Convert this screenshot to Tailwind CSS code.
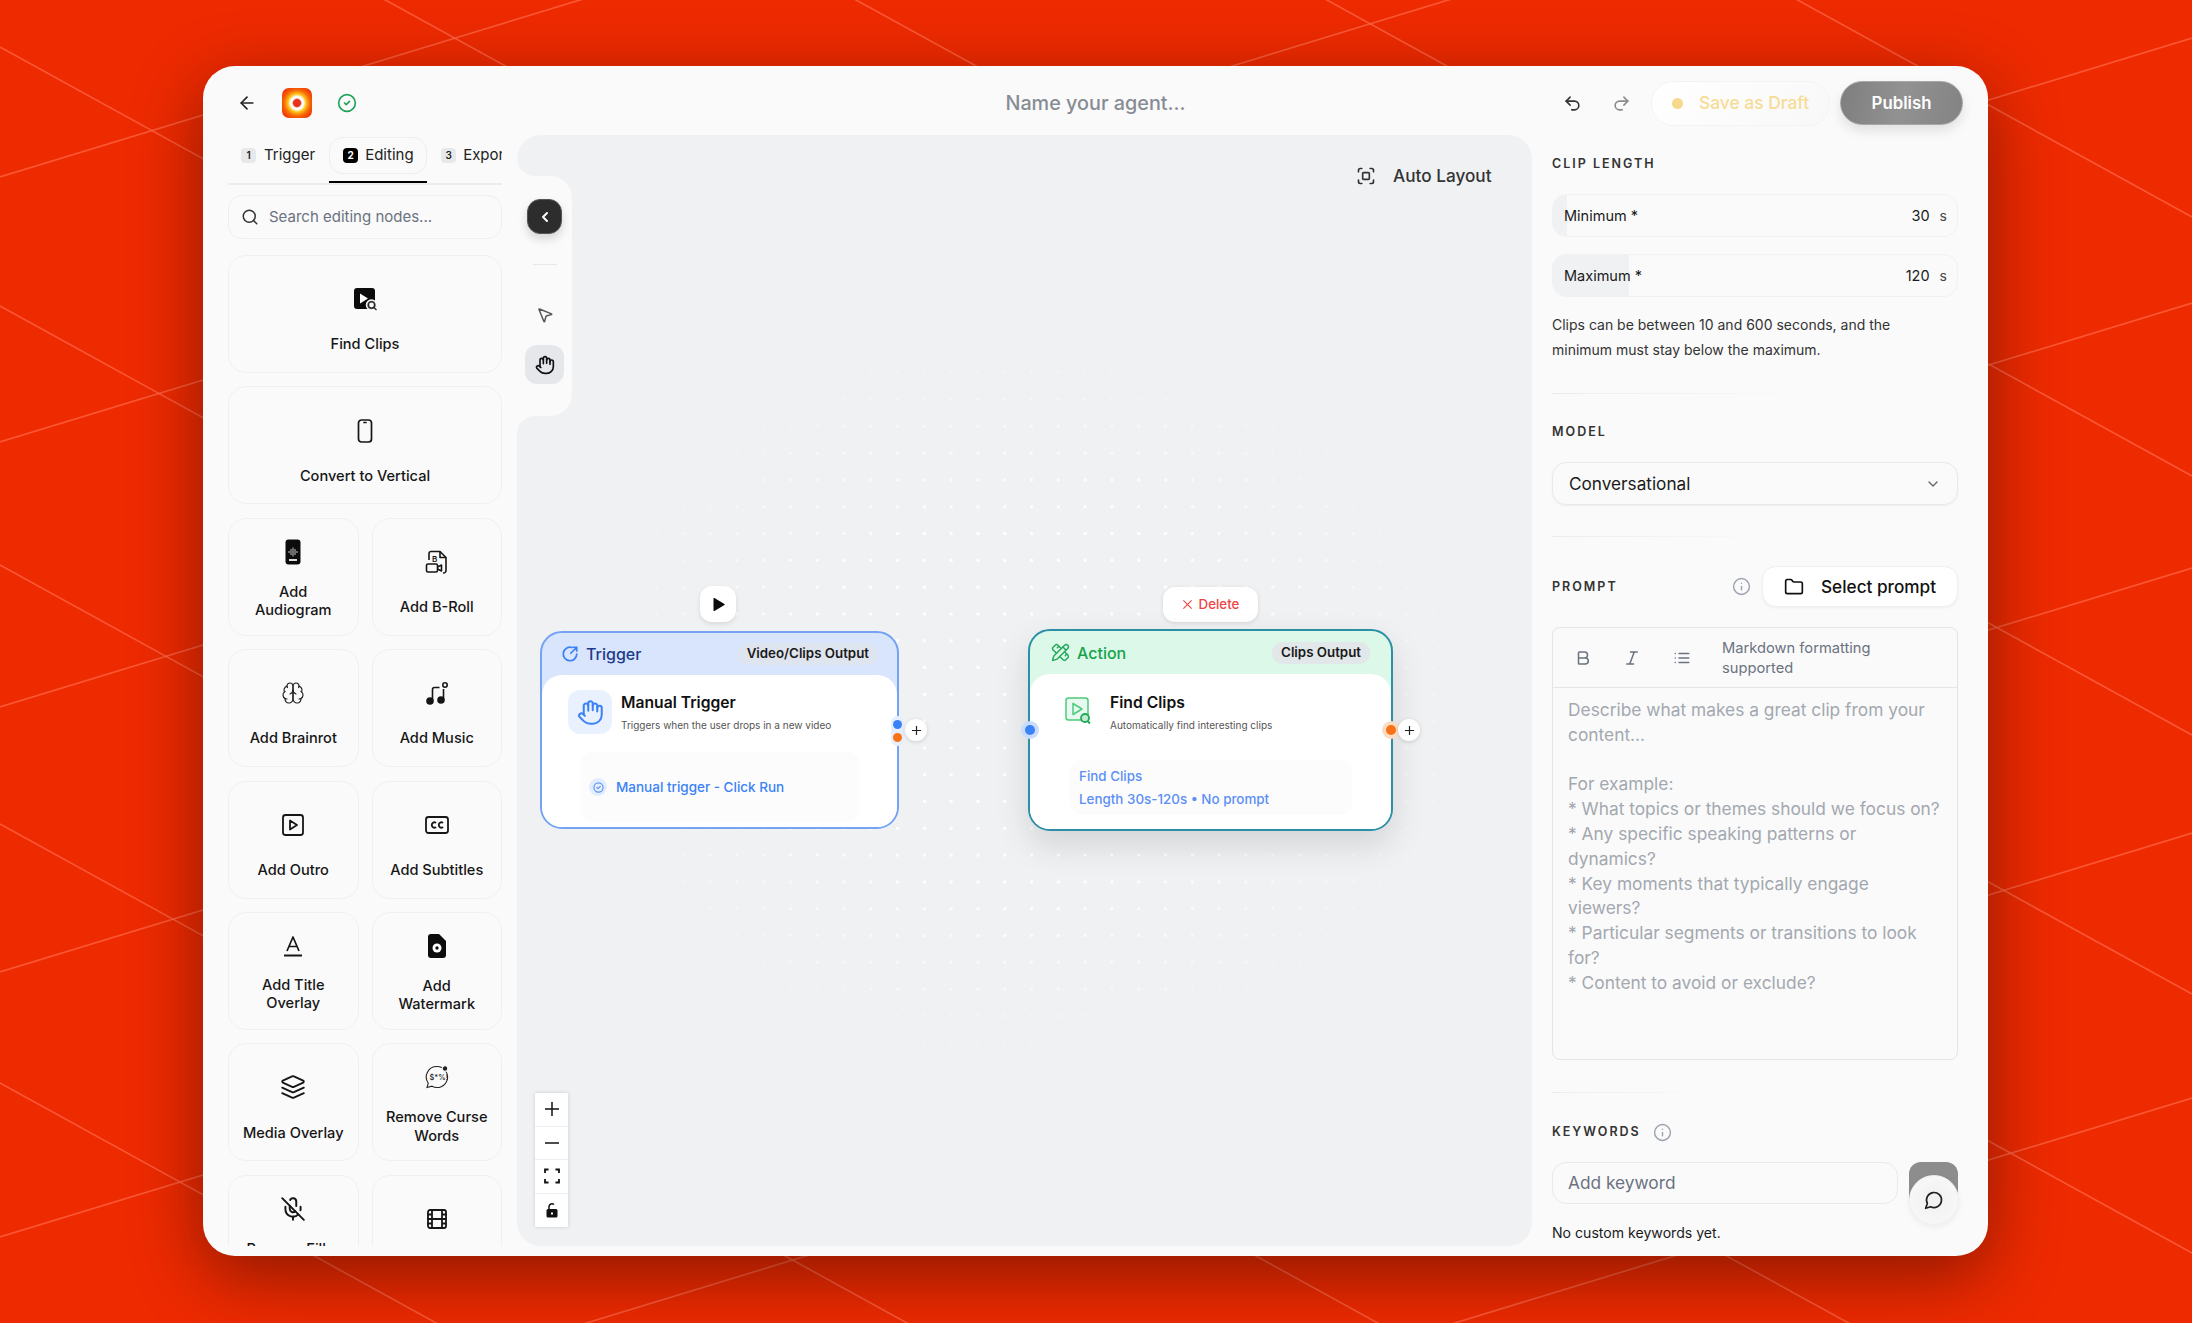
<!DOCTYPE html>
<html lang="en">
<head>
<meta charset="UTF-8">
<title>Agent builder</title>
<script src="https://cdn.jsdelivr.net/npm/@tailwindcss/browser@4"></script>
</head>
<body class="[font-family:Inter,sans-serif] bg-[#ee2a00] overflow-hidden">
<div class="relative w-[2192px] h-[1323px] overflow-hidden pt-[66px] pl-[203px]">

  <!-- background lines -->
  <svg class="absolute inset-0" width="2192" height="1323" viewBox="0 0 2192 1323" fill="none" stroke="#ff6a4a" stroke-width="1.7" stroke-opacity="0.7">
    <path d="M0 -989 L2192 217"/><path d="M0 -730 L2192 476"/><path d="M0 -471 L2192 735"/><path d="M0 -212 L2192 994"/>
    <path d="M0 47 L2192 1253"/><path d="M0 306 L2192 1512"/><path d="M0 565 L2192 1771"/><path d="M0 824 L2192 2030"/><path d="M0 1083 L2192 2289"/>
    <path d="M0 177 L2192 -492"/><path d="M0 442 L2192 -227"/><path d="M0 707 L2192 38"/><path d="M0 972 L2192 303"/><path d="M0 1237 L2192 568"/>
    <path d="M0 1502 L2192 833"/><path d="M0 1767 L2192 1098"/><path d="M0 2032 L2192 1363"/>
  </svg>

  <!-- window -->
  <div class="relative w-[1785px] h-[1190px] rounded-[32px] bg-[#fafafa] shadow-[0_20px_70px_rgba(0,0,0,0.42)] overflow-hidden flex flex-col">

    <!-- header -->
    <header class="h-[69px] shrink-0 pt-[5px] flex items-center">
      <div class="flex-1 flex items-center pl-[34px]">
        <svg class="w-5 h-5 text-[#222]" viewBox="0 0 24 24" fill="none" stroke="currentColor" stroke-width="2" stroke-linecap="round" stroke-linejoin="round"><path d="m12 19-7-7 7-7"/><path d="M19 12H5"/></svg>
        <div class="ml-[25px] w-[30px] h-[30px] rounded-[7px] bg-[radial-gradient(circle,#e8321a_0_3.5px,#fff_5px_6.5px,#fcc419_9px,#f76707_13px,#ee2a00_19px)]"></div>
        <svg class="ml-[25px] w-[20px] h-[20px] text-[#22a35a]" viewBox="0 0 24 24" fill="none" stroke="currentColor" stroke-width="2" stroke-linecap="round" stroke-linejoin="round"><circle cx="12" cy="12" r="10"/><path d="m9 12 2 2 4-4"/></svg>
      </div>
      <div class="-ml-[9px] pt-[2px] text-[19.8px] font-medium text-[#878c94]">Name your agent...</div>
      <div class="flex-1 flex items-center justify-end pr-[25px]">
        <svg class="w-[19px] h-[19px] text-[#333]" viewBox="0 0 24 24" fill="none" stroke="currentColor" stroke-width="2" stroke-linecap="round" stroke-linejoin="round"><path d="M9 14 4 9l5-5"/><path d="M4 9h10.5a5.5 5.5 0 0 1 5.5 5.5a5.5 5.5 0 0 1-5.5 5.5H11"/></svg>
        <svg class="ml-[30px] w-[19px] h-[19px] text-[#8c8c8c]" viewBox="0 0 24 24" fill="none" stroke="currentColor" stroke-width="2" stroke-linecap="round" stroke-linejoin="round"><path d="m15 14 5-5-5-5"/><path d="M20 9H9.5A5.5 5.5 0 0 0 4 14.5A5.5 5.5 0 0 0 9.5 20H13"/></svg>
        <div class="ml-[20px] w-[179px] h-[45px] rounded-full border border-[#f3f3f3] bg-[linear-gradient(135deg,#fff,#f8f8f8)] flex items-center pl-[20px] gap-[16px]">
          <span class="w-[11px] h-[11px] rounded-full bg-[#f6d98a]"></span>
          <span class="text-[17.4px] font-medium text-[#f7dc95]">Save as Draft</span>
        </div>
        <div class="ml-[10px] w-[123px] h-[44px] pt-[2px] rounded-full border border-[#a8a8a8] bg-[linear-gradient(100deg,#7e7e7e,#929292_50%,#838383)] shadow-[0_6px_12px_rgba(0,0,0,0.1)] flex items-center justify-center text-[16.8px] font-semibold text-white">Publish</div>
      </div>
    </header>

    <div class="flex-1 flex min-h-0">

      <!-- left sidebar -->
      <aside class="w-[314px] shrink-0 pl-[25px] pr-[15px] pb-[10px] flex flex-col min-h-0">
        <div class="h-[50px] shrink-0 border-b-2 border-[#ececec] flex items-start overflow-hidden text-[15px] text-[#222]">
          <div class="h-[37px] mt-[2px] pl-[13px] flex items-center gap-[8px]">
            <span class="w-[15px] h-[15px] rounded-[4px] bg-[#e7e8ea] flex items-center justify-center text-[10px] font-semibold">1</span>Trigger
          </div>
          <div class="relative h-[48px] ml-[14px] w-[98px] shrink-0">
            <div class="h-[37px] mt-[2px] rounded-[14px] border border-[#eeeeee] flex items-center pl-[13px] gap-[7px]">
              <span class="w-[15px] h-[15px] rounded-[4px] bg-black text-white flex items-center justify-center text-[10px] font-bold">2</span>Editing
            </div>
            <div class="absolute left-0 right-0 top-[46px] h-[2px] bg-black"></div>
          </div>
          <div class="h-[37px] mt-[2px] ml-[14px] flex items-center gap-[7px] shrink-0">
            <span class="w-[15px] h-[15px] rounded-[4px] bg-[#e7e8ea] flex items-center justify-center text-[10px] font-semibold">3</span>Export
          </div>
        </div>

        <div class="mt-[10px] h-[44px] shrink-0 rounded-[14px] border border-[#eeeeee] flex items-center pl-[12px] gap-[10px] text-[15px] text-[#6b7280]">
          <svg class="w-[18px] h-[18px] text-[#333]" viewBox="0 0 24 24" fill="none" stroke="currentColor" stroke-width="2" stroke-linecap="round"><circle cx="11" cy="11" r="8"/><path d="m21 21-4.3-4.3"/></svg>
          Search editing nodes...
        </div>

        <div class="mt-[16px] flex-1 min-h-0 overflow-hidden">
          <div class="grid grid-cols-2 gap-x-[13px] gap-y-[13.4px] text-[14.6px] leading-[18.5px] font-medium text-[#161616] text-center">

            <div class="col-span-2 h-[118px] rounded-[18px] border border-[#f0f0f0] flex flex-col items-center justify-center gap-[24px] pt-[13px]">
              <svg class="w-[26px] h-[24px]" viewBox="0 0 26 24"><rect x="2" y="1" width="21" height="21" rx="3" fill="#0c0c0c"/><path d="M8 6.500v10l8-5z" fill="#fff"/><circle cx="19.5" cy="18" r="5" fill="#555" stroke="#fafafa" stroke-width="1.5"/><circle cx="19.5" cy="18" r="3" fill="#fafafa" stroke="#222" stroke-width="1.2"/><path d="m22 20.5 2.5 2.5" stroke="#222" stroke-width="1.3"/></svg>
              <div>Find Clips</div>
            </div>

            <div class="col-span-2 h-[118px] rounded-[18px] border border-[#f0f0f0] flex flex-col items-center justify-center gap-[24px] pt-[13px]">
              <svg class="w-[24px] h-[24px]" viewBox="0 0 24 24" fill="none" stroke="#161616" stroke-width="1.7"><rect x="5.5" y="1" width="13" height="22" rx="3"/><path d="M11 3.5h2" stroke-linecap="round"/></svg>
              <div>Convert to Vertical</div>
            </div>

            <div class="h-[118px] rounded-[18px] border border-[#f0f0f0] flex flex-col items-center justify-center gap-[18px] pt-[5px]">
              <svg class="w-[24px] h-[26px]" viewBox="0 0 24 26"><rect x="4.5" y="0.5" width="15" height="25" rx="3" fill="#0c0c0c"/><path d="M8 12v2M10 10v6M12 8.500v9M14 10v6M16 12v2" stroke="#ddd" stroke-width="0.9"/><rect x="8" y="20" width="8" height="2" fill="#ddd"/></svg>
              <div>Add<br>Audiogram</div>
            </div>

            <div class="h-[118px] rounded-[18px] border border-[#f0f0f0] flex flex-col items-center justify-center gap-[24px] pt-[13px]">
              <svg class="w-[24px] h-[24px]" viewBox="0 0 24 24" fill="none" stroke="#161616" stroke-width="1.6" stroke-linejoin="round"><path d="M4 10V3.500a2 2 0 0 1 2-2h9l6 6v13a2.500 2.500 0 0 1-2.500 2.500H18"/><path d="M15 1.500v6h6"/><rect x="1.500" y="14" width="11" height="8" rx="1.500"/><path d="m12.500 17 4-2v6l-4-2"/><text x="7" y="11.500" font-size="8" font-weight="600" fill="#161616" stroke="none">B</text></svg>
              <div>Add B-Roll</div>
            </div>

            <div class="h-[118px] rounded-[18px] border border-[#f0f0f0] flex flex-col items-center justify-center gap-[24px] pt-[13px]">
              <svg class="w-[26px] h-[24px]" viewBox="0 0 24 24" fill="none" stroke="#222" stroke-width="1.2" stroke-linecap="round" stroke-linejoin="round"><path d="M12 5a3 3 0 1 0-5.997.125 4 4 0 0 0-2.526 5.77 4 4 0 0 0 .556 6.588A4 4 0 1 0 12 18Z"/><path d="M12 5a3 3 0 1 1 5.997.125 4 4 0 0 1 2.526 5.77 4 4 0 0 1-.556 6.588A4 4 0 1 1 12 18Z"/><path d="M15 13a4.500 4.500 0 0 1-3-4 4.500 4.500 0 0 1-3 4"/><path d="M17.599 6.500a3 3 0 0 0 .399-1.375"/><path d="M6.003 5.125A3 3 0 0 0 6.401 6.500"/><path d="M3.477 10.896a4 4 0 0 1 .585-.396"/><path d="M19.938 10.500a4 4 0 0 1 .585.396"/><path d="M6 18a4 4 0 0 1-1.967-.516"/><path d="M19.967 17.484A4 4 0 0 1 18 18"/></svg>
              <div>Add Brainrot</div>
            </div>

            <div class="h-[118px] rounded-[18px] border border-[#f0f0f0] flex flex-col items-center justify-center gap-[24px] pt-[13px]">
              <svg class="w-[24px] h-[24px]" viewBox="0 0 24 24" fill="none" stroke="#161616" stroke-width="1.6"><circle cx="5" cy="20" r="3" fill="#161616"/><circle cx="16" cy="19" r="3" fill="#161616"/><path d="M7.500 20V8.500a2 2 0 0 1 2-2h5"/><path d="M18.500 19V8"/><circle cx="20" cy="4" r="2.200"/></svg>
              <div>Add Music</div>
            </div>

            <div class="h-[118px] rounded-[18px] border border-[#f0f0f0] flex flex-col items-center justify-center gap-[24px] pt-[13px]">
              <svg class="w-[24px] h-[24px]" viewBox="0 0 24 24" fill="none" stroke="#161616" stroke-width="1.800" stroke-linejoin="round"><rect x="2" y="2" width="20" height="20" rx="2.500"/><path d="M9 7.500v9l7-4.500z"/></svg>
              <div>Add Outro</div>
            </div>

            <div class="h-[118px] rounded-[18px] border border-[#f0f0f0] flex flex-col items-center justify-center gap-[24px] pt-[13px]">
              <svg class="w-[24px] h-[24px]" viewBox="0 0 24 24" fill="none" stroke="#161616" stroke-width="1.800" stroke-linecap="round"><rect x="1" y="4" width="22" height="16" rx="2.500"/><path d="M10.500 9.500a2.700 2.700 0 1 0 0 5M17.500 9.500a2.700 2.700 0 1 0 0 5"/></svg>
              <div>Add Subtitles</div>
            </div>

            <div class="h-[118px] rounded-[18px] border border-[#f0f0f0] flex flex-col items-center justify-center gap-[18px] pt-[5px]">
              <svg class="w-[24px] h-[24px]" viewBox="0 0 24 24" fill="none" stroke="#161616" stroke-width="1.700" stroke-linejoin="round"><path d="m6 17 6-14 6 14M8 12.500h8"/><path d="M3 21.500h18" stroke-width="2"/></svg>
              <div>Add Title<br>Overlay</div>
            </div>

            <div class="h-[118px] rounded-[18px] border border-[#f0f0f0] flex flex-col items-center justify-center gap-[18px] pt-[5px]">
              <svg class="w-[24px] h-[26px]" viewBox="0 0 24 26"><path d="M6 1h8l7 7v14a3 3 0 0 1-3 3H6a3 3 0 0 1-3-3V4a3 3 0 0 1 3-3z" fill="#0c0c0c"/><circle cx="12" cy="15" r="4.500" fill="#fff"/><circle cx="12" cy="15" r="1.700" fill="#0c0c0c"/></svg>
              <div>Add<br>Watermark</div>
            </div>

            <div class="h-[118px] rounded-[18px] border border-[#f0f0f0] flex flex-col items-center justify-center gap-[24px] pt-[12px]">
              <svg class="w-[26px] h-[26px]" viewBox="0 0 24 24" fill="none" stroke="#161616" stroke-width="1.700" stroke-linecap="round" stroke-linejoin="round"><path d="m12.830 2.180a2 2 0 0 0-1.660 0L2.600 6.080a1 1 0 0 0 0 1.830l8.580 3.910a2 2 0 0 0 1.660 0l8.580-3.900a1 1 0 0 0 0-1.830Z"/><path d="m22 17.650-9.170 4.160a2 2 0 0 1-1.660 0L2 17.650"/><path d="m22 12.650-9.170 4.160a2 2 0 0 1-1.660 0L2 12.650"/></svg>
              <div>Media Overlay</div>
            </div>

            <div class="h-[118px] rounded-[18px] border border-[#f0f0f0] flex flex-col items-center justify-center gap-[18px] pt-[5px]">
              <svg class="w-[26px] h-[26px]" viewBox="0 0 26 26" fill="none" stroke="#222" stroke-width="1.100"><path d="M13 2.500a10.500 10.500 0 1 1-5 19.700L3 23.500l1.300-4.300A10.500 10.500 0 0 1 13 2.500z"/><text x="5.500" y="15.500" font-size="7.500" font-weight="500" fill="#222" stroke="none">$*%!</text><circle cx="21" cy="4.500" r="2.800" fill="#222" stroke="#fafafa"/></svg>
              <div>Remove Curse<br>Words</div>
            </div>

            <div class="h-[118px] rounded-[18px] border border-[#f0f0f0] flex flex-col items-center justify-center gap-[18px] pt-[5px]">
              <svg class="w-[26px] h-[26px]" viewBox="0 0 24 24" fill="none" stroke="#161616" stroke-width="1.800" stroke-linecap="round" stroke-linejoin="round"><path d="m2 2 20 20"/><path d="M18.890 13.230A7.120 7.120 0 0 0 19 12v-2"/><path d="M5 10v2a7 7 0 0 0 12 5"/><path d="M15 9.340V5a3 3 0 0 0-5.680-1.330"/><path d="M9 9v3a3 3 0 0 0 5.120 2.120"/><path d="M12 19v3"/></svg>
              <div>Remove Filler<br>Words</div>
            </div>

            <div class="h-[118px] rounded-[18px] border border-[#f0f0f0] flex flex-col items-center justify-center gap-[24px] pt-[13px]">
              <svg class="w-[24px] h-[24px]" viewBox="0 0 24 24" fill="none" stroke="#161616" stroke-width="1.800" stroke-linecap="round" stroke-linejoin="round"><rect x="3" y="3" width="18" height="18" rx="2"/><path d="M7 3v18M3 7.500h4M3 12h18M3 16.500h4M17 3v18M17 7.500h4M17 16.500h4"/></svg>
              <div>&nbsp;</div>
            </div>
          </div>
        </div>
      </aside>

      <!-- canvas -->
      <main class="relative w-[1015px] shrink-0 mb-[10px] rounded-[24px] bg-[#f0f1f3] overflow-hidden">
        <div class="absolute inset-0 bg-[radial-gradient(circle,#ffffff_0_1.3px,transparent_1.800px)] [background-size:26.8px_26.8px] [background-position:-8px_10px] [mask-image:radial-gradient(ellipse_480px_400px_at_50%_51%,black_45%,transparent_100%)]"></div>

        <!-- tool rail -->
        <div class="absolute left-0 top-[41px] w-[55px] h-[240px] bg-[#fafafa] rounded-r-[22px] flex flex-col items-center pt-[23px]">
          <div class="absolute left-0 -top-[18px] w-[18px] h-[18px] bg-[#fafafa]"><div class="w-full h-full bg-[#f0f1f3] rounded-bl-[18px]"></div></div>
          <div class="absolute left-0 -bottom-[18px] w-[18px] h-[18px] bg-[#fafafa]"><div class="w-full h-full bg-[#f0f1f3] rounded-tl-[18px]"></div></div>
          <div class="w-[35px] h-[35px] rounded-[13px] border border-[#555] bg-[#2d2d2d] shadow-[0_5px_10px_rgba(0,0,0,0.15)] flex items-center justify-center">
            <svg class="w-4 h-4 text-white" viewBox="0 0 24 24" fill="none" stroke="currentColor" stroke-width="3" stroke-linecap="round" stroke-linejoin="round"><path d="m15 18-6-6 6-6"/></svg>
          </div>
          <div class="mt-[30px] w-[24px] h-px bg-[#e8e8e8]"></div>
          <svg class="mt-[41px] w-[18px] h-[18px] text-[#555]" viewBox="0 0 24 24" fill="none" stroke="currentColor" stroke-width="2" stroke-linejoin="round"><path d="M4.037 4.688a.495.495 0 0 1 .651-.651l16 6.500a.5.5 0 0 1-.063.947l-6.124 1.580a2 2 0 0 0-1.438 1.435l-1.579 6.126a.5.5 0 0 1-.947.063z"/></svg>
          <div class="mt-[21px] w-[39px] h-[39px] rounded-[12px] bg-[#e5e7eb] flex items-center justify-center">
            <svg class="w-[20px] h-[20px] text-[#111]" viewBox="0 0 24 24" fill="none" stroke="currentColor" stroke-width="2" stroke-linecap="round" stroke-linejoin="round"><path d="M18 11V6a2 2 0 0 0-2-2a2 2 0 0 0-2 2"/><path d="M14 10V4a2 2 0 0 0-2-2a2 2 0 0 0-2 2v2"/><path d="M10 10.500V6a2 2 0 0 0-2-2a2 2 0 0 0-2 2v8"/><path d="M18 8a2 2 0 1 1 4 0v6a8 8 0 0 1-8 8h-2c-2.800 0-4.500-.86-5.990-2.340l-3.600-3.600a2 2 0 0 1 2.830-2.820L7 15"/></svg>
          </div>
        </div>

        <!-- auto layout -->
        <div class="absolute top-[28px] left-[839px] flex items-center gap-[17px] text-[17.2px] font-medium text-[#333]">
          <svg class="w-[20px] h-[20px]" viewBox="0 0 24 24" fill="none" stroke="#333" stroke-width="2" stroke-linecap="round"><path d="M3 7V5a2 2 0 0 1 2-2h2"/><path d="M17 3h2a2 2 0 0 1 2 2v2"/><path d="M21 17v2a2 2 0 0 1-2 2h-2"/><path d="M7 21H5a2 2 0 0 1-2-2v-2"/><rect x="8" y="8" width="8" height="8" rx="1"/></svg>
          Auto Layout
        </div>

        <!-- play button -->
        <div class="absolute left-[183px] top-[451px] w-[36px] h-[36px] rounded-[12px] bg-white shadow-[0_2px_5px_rgba(0,0,0,0.1)] flex items-center justify-center">
          <svg class="w-[15px] h-[15px]" viewBox="0 0 24 24"><path d="M4 2.500v19a1 1 0 0 0 1.500.8l16-9.500a1 1 0 0 0 0-1.700l-16-9.500A1 1 0 0 0 4 2.500z" fill="#0c0c0c"/></svg>
        </div>

        <!-- trigger node -->
        <div class="absolute left-[23px] top-[496px] w-[359px] h-[198px] rounded-[22px] border-2 border-[#74a3f3] bg-[#d8e5fd] flex flex-col">
          <div class="h-[42px] shrink-0 pb-[1px] pl-[19px] pr-[19px] flex items-center justify-between">
            <div class="flex items-center gap-[7px] text-[16px] font-medium text-[#1e3a8a]">
              <svg class="w-[18px] h-[18px]" viewBox="0 0 24 24" fill="none" stroke="#3b82f6" stroke-width="2.300" stroke-linecap="round" stroke-linejoin="round"><path d="M21 12a9 9 0 1 1-6.500-8.650"/><path d="m13 11 8-8M16 3h5v5"/></svg>
              Trigger
            </div>
            <div class="h-[22px] px-[9px] rounded-full bg-[#dfe5ef] flex items-center text-[13.3px] font-semibold text-[#1a1a1a]">Video/Clips Output</div>
          </div>
          <div class="flex-1 bg-white rounded-[20px] pt-[15px] px-[26px]">
            <div class="flex gap-[9px]">
              <div class="w-[44px] h-[44px] rounded-[12px] bg-[#eaf1fe] flex items-center justify-center">
                <svg class="w-[27px] h-[27px]" viewBox="0 0 24 24" fill="none" stroke="#3b82f6" stroke-width="1.800" stroke-linecap="round" stroke-linejoin="round"><path d="M18 11V6a2 2 0 0 0-2-2a2 2 0 0 0-2 2"/><path d="M14 10V4a2 2 0 0 0-2-2a2 2 0 0 0-2 2v2"/><path d="M10 10.500V6a2 2 0 0 0-2-2a2 2 0 0 0-2 2v8"/><path d="M18 8a2 2 0 1 1 4 0v6a8 8 0 0 1-8 8h-2c-2.800 0-4.500-.86-5.990-2.340l-3.600-3.600a2 2 0 0 1 2.830-2.820L7 15"/></svg>
              </div>
              <div class="pt-[3px]">
                <div class="text-[15.7px] leading-[20px] font-semibold text-[#111]">Manual Trigger</div>
                <div class="mt-[5px] text-[10px] leading-[14px] text-[#555]">Triggers when the user drops in a new video</div>
              </div>
            </div>
            <div class="mt-[18px] ml-[12px] w-[280px] h-[70px] rounded-[12px] bg-[#fcfcfd] flex items-center pl-[9px] gap-[9px] text-[13.5px] font-medium text-[#3b82f6]">
              <span class="w-[18px] h-[18px] rounded-full bg-[#e3edfd] flex items-center justify-center">
                <svg class="w-[11px] h-[11px]" viewBox="0 0 24 24" fill="none" stroke="#5b93f3" stroke-width="2.500" stroke-linecap="round" stroke-linejoin="round"><circle cx="12" cy="12" r="10"/><path d="m8.500 12 2.500 2.500 5-5"/></svg>
              </span>
              Manual trigger - Click Run
            </div>
          </div>
        </div>
        <div class="absolute left-[374px] top-[581px] w-[13px] h-[30px] rounded-full bg-[#e6effd] flex flex-col items-center justify-center gap-[4px]">
          <span class="w-[9px] h-[9px] rounded-full bg-[#3b82f6]"></span>
          <span class="w-[9px] h-[9px] rounded-full bg-[#f97316]"></span>
        </div>
        <div class="absolute left-[388px] top-[584px] w-[22px] h-[22px] rounded-full bg-white shadow-[0_1px_4px_rgba(0,0,0,0.15)] flex items-center justify-center">
          <svg class="w-[11px] h-[11px]" viewBox="0 0 12 12" stroke="#222" stroke-width="1.300"><path d="M6 1v10M1 6h10"/></svg>
        </div>

        <!-- delete button -->
        <div class="absolute left-[646px] top-[452px] w-[95px] h-[35px] rounded-[12px] bg-white shadow-[0_1px_4px_rgba(0,0,0,0.12)] flex items-center justify-center gap-[6px] text-[13.3px] font-medium text-[#ef4444]">
          <svg class="w-[11px] h-[11px]" viewBox="0 0 12 12" stroke="#ef4444" stroke-width="1.200"><path d="m1.500 1.500 9 9M10.500 1.500l-9 9"/></svg>
          Delete
        </div>

        <!-- action node -->
        <div class="absolute left-[511px] top-[494px] w-[365px] h-[202px] rounded-[22px] border-2 border-[#2c8fa6] bg-[#dcf8e8] shadow-[0_14px_34px_rgba(0,0,0,0.12)] flex flex-col">
          <div class="h-[43px] shrink-0 pl-[21px] pr-[21px] flex items-center justify-between">
            <div class="flex items-center gap-[7px] text-[16px] font-medium text-[#16a34a]">
              <svg class="w-[19px] h-[19px]" viewBox="0 0 24 24" fill="none" stroke="#22a85a" stroke-width="1.800" stroke-linecap="round" stroke-linejoin="round"><path d="M13 7 8.700 2.700a2.410 2.410 0 0 0-3.400 0L2.700 5.300a2.410 2.410 0 0 0 0 3.400L7 13"/><path d="m8 6 2-2"/><path d="m18 16 2-2"/><path d="m17 11 4.300 4.300c.94.94.94 2.460 0 3.400l-2.600 2.600c-.94.94-2.460.94-3.400 0L11 17"/><path d="M21.174 6.812a1 1 0 0 0-3.986-3.987L3.842 16.174a2 2 0 0 0-.5.83l-1.321 4.352a.5.5 0 0 0 .623.622l4.353-1.320a2 2 0 0 0 .83-.497z"/><path d="m15 5 4 4"/></svg>
              Action
            </div>
            <div class="h-[22px] px-[9px] rounded-full bg-[#e2e7e9] flex items-center text-[13.3px] font-semibold text-[#1a1a1a]">Clips Output</div>
          </div>
          <div class="flex-1 bg-white rounded-[20px] pt-[23px] pl-[35px]">
            <div class="flex gap-[19px] h-[28px]">
              <svg class="w-[26px] h-[28px]" viewBox="0 0 26 28" fill="none" stroke="#4ccb7c" stroke-width="1.500" stroke-linejoin="round"><rect x="1" y="1" width="22" height="22" rx="2.500" fill="#e8f9ef"/><path d="M8 6.500v11l9-5.500z"/><circle cx="20" cy="21" r="4" fill="#bfeccf" stroke="#22a85a" stroke-width="1.800"/><path d="m23 24.500 2 2" stroke="#22a85a" stroke-width="1.800"/></svg>
              <div class="-mt-[4px]">
                <div class="text-[15.7px] leading-[20px] font-semibold text-[#111]">Find Clips</div>
                <div class="mt-[5px] text-[10px] leading-[14px] text-[#555]">Automatically find interesting clips</div>
              </div>
            </div>
            <div class="mt-[35px] ml-[5px] w-[282px] h-[55px] rounded-[12px] bg-[#fcfcfd] pl-[9px] flex flex-col justify-center text-[13.4px] leading-[23px] font-medium text-[#5b8ff5]">
              <div>Find Clips</div>
              <div>Length 30s-120s • No prompt</div>
            </div>
          </div>
        </div>
        <div class="absolute left-[504px] top-[586px] w-[18px] h-[18px] rounded-full bg-[#c9dcfb] flex items-center justify-center"><span class="w-[10px] h-[10px] rounded-full bg-[#3b82f6]"></span></div>
        <div class="absolute left-[865px] top-[586px] w-[18px] h-[18px] rounded-full bg-[#fcdcc4] flex items-center justify-center"><span class="w-[10px] h-[10px] rounded-full bg-[#f97316]"></span></div>
        <div class="absolute left-[881px] top-[584px] w-[22px] h-[22px] rounded-full bg-white shadow-[0_1px_4px_rgba(0,0,0,0.15)] flex items-center justify-center">
          <svg class="w-[11px] h-[11px]" viewBox="0 0 12 12" stroke="#222" stroke-width="1.300"><path d="M6 1v10M1 6h10"/></svg>
        </div>

        <!-- zoom controls -->
        <div class="absolute left-[18px] top-[958px] w-[33px] bg-white shadow-[0_0_4px_rgba(0,0,0,0.15)] flex flex-col divide-y divide-[#eeeeee]">
          <div class="h-[33.5px] flex items-center justify-center"><svg class="w-[16px] h-[16px]" viewBox="0 0 16 16" stroke="#111" stroke-width="1.500"><path d="M8 1v14M1 8h14"/></svg></div>
          <div class="h-[33.5px] flex items-center justify-center"><svg class="w-[16px] h-[16px]" viewBox="0 0 16 16" stroke="#111" stroke-width="1.500"><path d="M1 8h14"/></svg></div>
          <div class="h-[33.5px] flex items-center justify-center"><svg class="w-[16px] h-[16px]" viewBox="0 0 16 16" fill="none" stroke="#111" stroke-width="1.800"><path d="M1 5V1.500h3.500M11.500 1.500H15V5M15 11v3.500h-3.500M4.500 14.500H1V11"/></svg></div>
          <div class="h-[33.5px] flex items-center justify-center"><svg class="w-[14px] h-[16px]" viewBox="0 0 14 16"><path d="M4 7V4.500a3 3 0 0 1 5-2" fill="none" stroke="#111" stroke-width="1.500"/><rect x="1.500" y="7" width="11" height="8.500" rx="1.500" fill="#111"/><rect x="6" y="10.500" width="2" height="2" fill="#fff"/></svg></div>
        </div>
      </main>

      <!-- right panel -->
      <section class="relative flex-1 min-w-0 pl-[20px] pr-[30px] pt-[21px] overflow-hidden text-[#1a1a1a]">
        <div class="text-[12.5px] leading-[16px] font-semibold tracking-[0.16em] text-[#333]">CLIP LENGTH</div>

        <div class="relative mt-[22px] h-[43px] rounded-[14px] border border-[#f1f1f1] overflow-hidden flex items-center pl-[11px] pr-[10px] text-[14.5px]">
          <div class="absolute left-0 top-0 bottom-0 w-[14px] bg-[#f0f1f3]"></div>
          <span class="relative">Minimum *</span>
          <span class="relative ml-auto">30</span><span class="relative ml-[10px] text-[#444] text-[14px]">s</span>
        </div>
        <div class="relative mt-[17px] h-[43px] rounded-[14px] border border-[#f1f1f1] overflow-hidden flex items-center pl-[11px] pr-[10px] text-[14.5px]">
          <div class="absolute left-0 top-0 bottom-0 w-[76px] bg-[#f0f1f3]"></div>
          <span class="relative">Maximum *</span>
          <span class="relative ml-auto">120</span><span class="relative ml-[10px] text-[#444] text-[14px]">s</span>
        </div>
        <p class="mt-[15px] w-[385px] text-[14px] leading-[25px] text-[#333]">Clips can be between 10 and 600 seconds, and the minimum must stay below the maximum.</p>

        <div class="mt-[31px] h-px w-[270px] bg-[linear-gradient(90deg,#ececec,transparent)]"></div>

        <div class="mt-[30px] text-[12.5px] leading-[16px] font-semibold tracking-[0.16em] text-[#333]">MODEL</div>
        <div class="mt-[22px] h-[43px] rounded-[14px] border border-[#e9e9e9] shadow-[0_1px_2px_rgba(0,0,0,0.05)] flex items-center pl-[16px] pr-[16px] text-[17.2px] justify-between">
          Conversational
          <svg class="w-[16px] h-[16px] text-[#666]" viewBox="0 0 24 24" fill="none" stroke="currentColor" stroke-width="2" stroke-linecap="round" stroke-linejoin="round"><path d="m6 9 6 6 6-6"/></svg>
        </div>

        <div class="mt-[31px] h-px w-[220px] bg-[linear-gradient(90deg,#ececec,transparent)]"></div>

        <div class="mt-[29px] h-[41px] flex items-center">
          <div class="text-[12.5px] leading-[16px] font-semibold tracking-[0.16em] text-[#333]">PROMPT</div>
          <svg class="ml-auto w-[19px] h-[19px] text-[#9ca3af]" viewBox="0 0 24 24" fill="none" stroke="currentColor" stroke-width="1.800" stroke-linecap="round"><circle cx="12" cy="12" r="10"/><path d="M12 16v-4M12 8h.01"/></svg>
          <div class="ml-[11px] w-[196px] h-[41px] rounded-[14px] border border-[#f0f0f0] bg-white shadow-[0_1px_3px_rgba(0,0,0,0.05)] flex items-center pl-[21px] gap-[17px] text-[17.2px] font-medium text-[#111]">
            <svg class="w-[20px] h-[20px]" viewBox="0 0 24 24" fill="none" stroke="currentColor" stroke-width="2" stroke-linecap="round" stroke-linejoin="round"><path d="M20 20a2 2 0 0 0 2-2V8a2 2 0 0 0-2-2h-7.900a2 2 0 0 1-1.690-.9L9.600 3.900A2 2 0 0 0 7.930 3H4a2 2 0 0 0-2 2v13a2 2 0 0 0 2 2Z"/></svg>
            Select prompt
          </div>
        </div>

        <div class="mt-[20px] h-[433px] rounded-[8px] border border-[#e5e5e5] flex flex-col">
          <div class="h-[60px] shrink-0 border-b border-[#e5e5e5] flex items-center pl-[21px] text-[#6b7280]">
            <svg class="w-[18px] h-[18px]" viewBox="0 0 24 24" fill="none" stroke="currentColor" stroke-width="2" stroke-linecap="round" stroke-linejoin="round"><path d="M6 12h9a4 4 0 0 1 0 8H7a1 1 0 0 1-1-1V5a1 1 0 0 1 1-1h7a4 4 0 0 1 0 8"/></svg>
            <svg class="ml-[31px] w-[18px] h-[18px]" viewBox="0 0 24 24" fill="none" stroke="currentColor" stroke-width="2" stroke-linecap="round"><path d="M19 4h-9M14 20H5M15 4 9 20"/></svg>
            <svg class="ml-[32px] w-[18px] h-[18px]" viewBox="0 0 24 24" fill="none" stroke="currentColor" stroke-width="2" stroke-linecap="round"><path d="M3 12h.01M3 18h.01M3 6h.01M8 12h13M8 18h13M8 6h13"/></svg>
            <div class="ml-[31px] w-[180px] text-[14.7px] leading-[20px]">Markdown formatting supported</div>
          </div>
          <div class="pt-[10px] pl-[15px] pr-[13px] text-[17.35px] leading-[24.800px] text-[#a3a8b0]">
            Describe what makes a great clip from your content...<br><br>For example:<br>* What topics or themes should we focus on?<br>* Any specific speaking patterns or dynamics?<br>* Key moments that typically engage viewers?<br>* Particular segments or transitions to look for?<br>* Content to avoid or exclude?
          </div>
        </div>

        <div class="mt-[32px] h-px w-[160px] bg-[linear-gradient(90deg,#ececec,transparent)]"></div>

        <div class="mt-[31px] h-[16px] flex items-center gap-[12px]">
          <div class="text-[12.5px] leading-[16px] font-semibold tracking-[0.16em] text-[#333]">KEYWORDS</div>
          <svg class="w-[19px] h-[19px] text-[#9ca3af]" viewBox="0 0 24 24" fill="none" stroke="currentColor" stroke-width="1.800" stroke-linecap="round"><circle cx="12" cy="12" r="10"/><path d="M12 16v-4M12 8h.01"/></svg>
        </div>
        <div class="mt-[22px] flex gap-[11px]">
          <div class="w-[346px] h-[42px] rounded-[14px] border border-[#e9e9e9] flex items-center pl-[15px] text-[17.3px] text-[#6b7280]">Add keyword</div>
          <div class="w-[49px] h-[46px] rounded-[12px] bg-[#8d8d8d]"></div>
        </div>
        <div class="-mt-[4px] pt-[19px] text-[14.1px] leading-[20px]">No custom keywords yet.</div>

        <div class="absolute left-[377px] top-[1040px] w-[50px] h-[50px] rounded-full border border-[#eeeeee] bg-[radial-gradient(circle,#f0f0f0,#fafafa)] shadow-[0_2px_6px_rgba(0,0,0,0.06)] flex items-center justify-center">
          <svg class="w-[20px] h-[20px] text-[#222]" viewBox="0 0 24 24" fill="none" stroke="currentColor" stroke-width="2" stroke-linejoin="round"><path d="M7.900 20A9 9 0 1 0 4 16.100L2 22Z"/></svg>
        </div>
      </section>
    </div>
  </div>
</div>
</body>
</html>
